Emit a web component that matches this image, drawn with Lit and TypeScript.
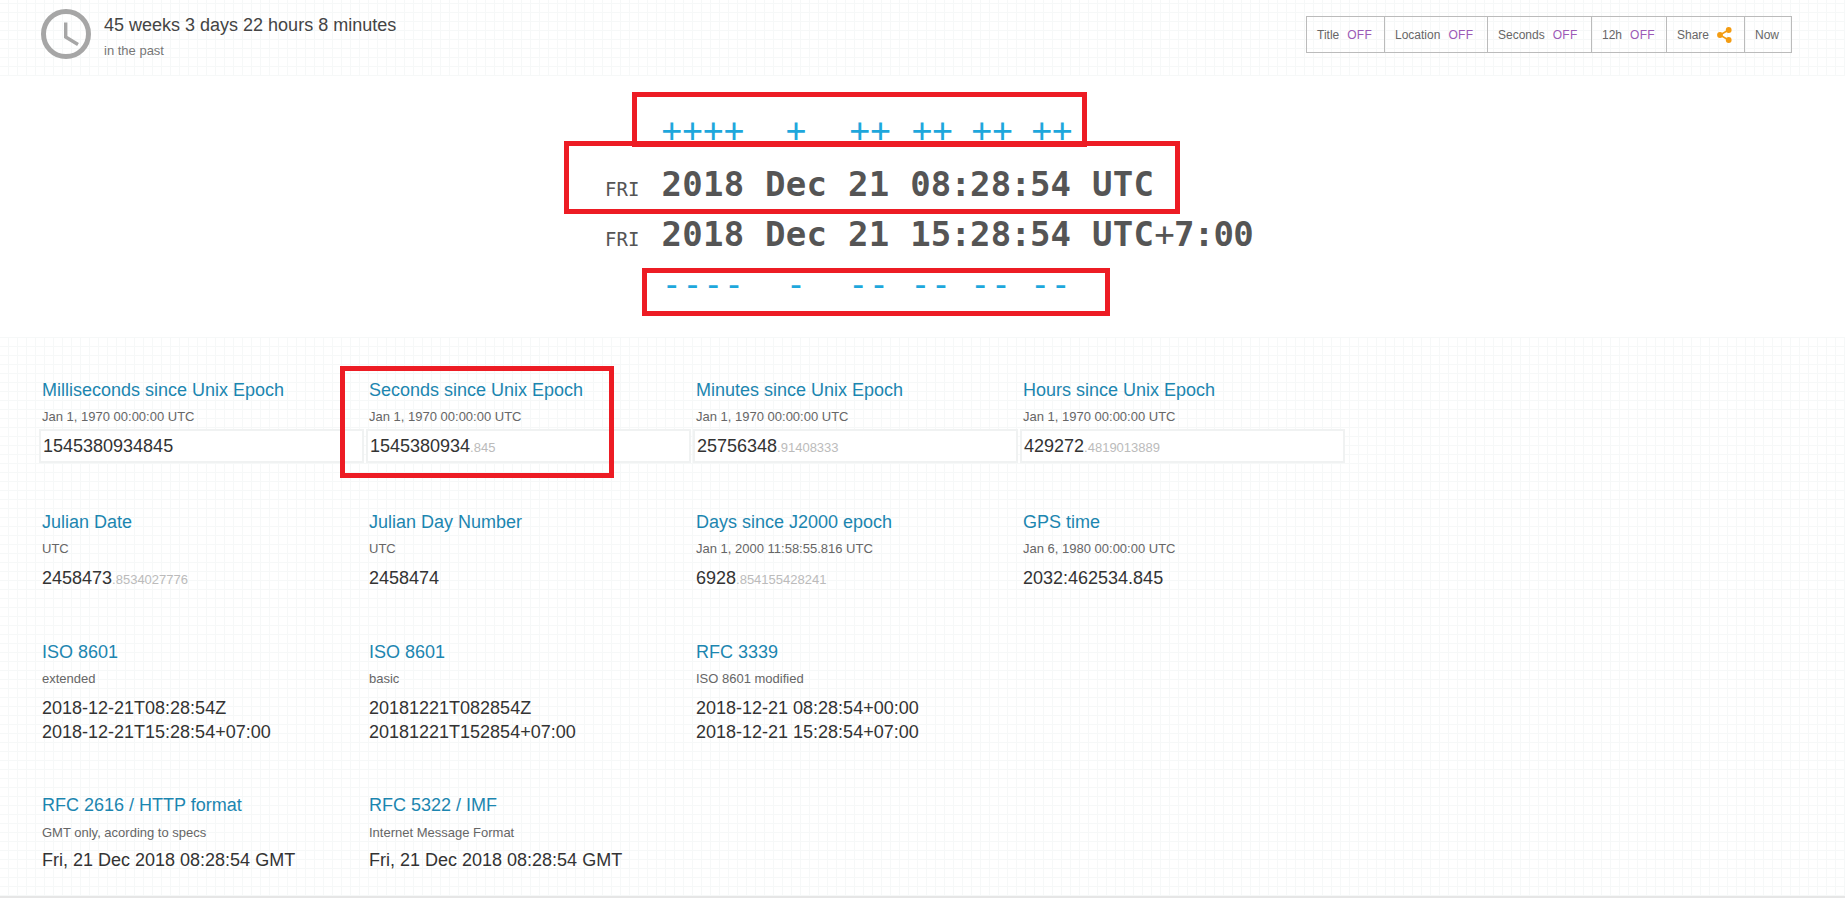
import { LitElement, html, css } from "lit";
import { customElement } from "lit/decorators.js";

interface Card {
  title: string;
  sub: string;
  lines: [string, string?][];
  boxed?: boolean;
}

const ROWS: { cls: string; cards: Card[] }[] = [
  {
    cls: "r1",
    cards: [
      { title: "Milliseconds since Unix Epoch", sub: "Jan 1, 1970 00:00:00 UTC", lines: [["1545380934845"]], boxed: true },
      { title: "Seconds since Unix Epoch", sub: "Jan 1, 1970 00:00:00 UTC", lines: [["1545380934", ".845"]], boxed: true },
      { title: "Minutes since Unix Epoch", sub: "Jan 1, 1970 00:00:00 UTC", lines: [["25756348", ".91408333"]], boxed: true },
      { title: "Hours since Unix Epoch", sub: "Jan 1, 1970 00:00:00 UTC", lines: [["429272", ".4819013889"]], boxed: true },
    ],
  },
  {
    cls: "r2",
    cards: [
      { title: "Julian Date", sub: "UTC", lines: [["2458473", ".8534027776"]] },
      { title: "Julian Day Number", sub: "UTC", lines: [["2458474"]] },
      { title: "Days since J2000 epoch", sub: "Jan 1, 2000 11:58:55.816 UTC", lines: [["6928", ".854155428241"]] },
      { title: "GPS time", sub: "Jan 6, 1980 00:00:00 UTC", lines: [["2032:462534.845"]] },
    ],
  },
  {
    cls: "r3",
    cards: [
      { title: "ISO 8601", sub: "extended", lines: [["2018-12-21T08:28:54Z"], ["2018-12-21T15:28:54+07:00"]] },
      { title: "ISO 8601", sub: "basic", lines: [["20181221T082854Z"], ["20181221T152854+07:00"]] },
      { title: "RFC 3339", sub: "ISO 8601 modified", lines: [["2018-12-21 08:28:54+00:00"], ["2018-12-21 15:28:54+07:00"]] },
    ],
  },
  {
    cls: "r4",
    cards: [
      { title: "RFC 2616 / HTTP format", sub: "GMT only, acording to specs", lines: [["Fri, 21 Dec 2018 08:28:54 GMT"]] },
      { title: "RFC 5322 / IMF", sub: "Internet Message Format", lines: [["Fri, 21 Dec 2018 08:28:54 GMT"]] },
    ],
  },
];

@customElement("app-root")
export class AppRoot extends LitElement {
  static styles = css`
    :host {
      display: block;
      position: relative;
      height: 907px;
      overflow: hidden;
      background: #fff;
      font-family: "Liberation Sans", Arial, sans-serif;
      color: #333;
    }
    .header {
      height: 76px;
      display: flex;
      justify-content: space-between;
      align-items: flex-start;
      padding: 0 53px 0 41px;
      background-image: linear-gradient(#f6f8f8 1px, transparent 1px),
        linear-gradient(90deg, #f6f8f8 1px, transparent 1px);
      background-size: 9px 9px;
      background-position: 8px 3px;
    }
    .since {
      display: flex;
      gap: 13px;
      padding-top: 9px;
    }
    .clock {
      width: 50px;
      height: 50px;
      display: block;
    }
    .since-main {
      font-size: 18px;
      line-height: 20px;
      margin-top: 6px;
      color: #444;
    }
    .since-sub {
      font-size: 13px;
      line-height: 16px;
      margin-top: 8px;
      color: #777;
    }
    .toolbar {
      display: flex;
      margin-top: 16px;
      border: 1px solid #bbb;
      height: 37px;
      box-sizing: border-box;
      font-size: 12px;
      color: #666;
    }
    .tool {
      display: flex;
      align-items: center;
      gap: 8px;
      padding: 0 10px;
      border-left: 1px solid #bbb;
      box-sizing: border-box;
      white-space: nowrap;
    }
    .tool:first-child {
      border-left: none;
    }
    .w1 { width: 77px; }
    .w2 { width: 103px; }
    .w3 { width: 104px; }
    .w4 { width: 75px; }
    .w5 { width: 78px; }
    .w6 { width: 47px; }
    .off {
      color: #9b59b6;
      letter-spacing: 0.3px;
    }
    .share {
      display: block;
    }
    .hero {
      height: 261px;
      box-sizing: border-box;
      padding: 29px 0 0 605px;
      font-family: "DejaVu Sans Mono", monospace;
      font-size: 34px;
      letter-spacing: 0.25px;
    }
    .tline {
      display: flex;
      align-items: baseline;
      height: 50px;
      line-height: 50px;
      white-space: pre;
    }
    .plus {
      margin-bottom: 4px;
    }
    .dow {
      width: 56.5px;
      font-size: 19px;
      color: #555;
      letter-spacing: 0;
    }
    .time {
      font-weight: 700;
      color: #555;
    }
    .colon {
      letter-spacing: -2.05px;
      margin-left: -1px;
      margin-right: 1px;
    }
    .zone {
      letter-spacing: -0.7px;
    }
    .thin {
      font-weight: 400;
    }
    .delta {
      color: #1ea7dc;
    }
    .nudge {
      margin-left: 1.5px;
    }
    .cards {
      height: 559px;
      box-sizing: border-box;
      padding-top: 43px;
      padding-left: 39px;
      background-image: linear-gradient(#f6f8f8 1px, transparent 1px),
        linear-gradient(90deg, #f6f8f8 1px, transparent 1px);
      background-size: 9px 9px;
      background-position: 8px 0;
    }
    .row {
      display: grid;
      grid-template-columns: repeat(4, 325px);
      column-gap: 2px;
    }
    .r1 {
      margin-bottom: 49px;
    }
    .r2 {
      margin-bottom: 50px;
    }
    .r3 {
      margin-bottom: 51px;
    }
    .title {
      padding-left: 3px;
      font-size: 18px;
      line-height: 20px;
      color: #1c86b0;
    }
    .sub {
      padding-left: 3px;
      margin-top: 9px;
      font-size: 13px;
      line-height: 16px;
      color: #666;
    }
    .r4 .sub {
      margin-top: 10px;
    }
    .sub + .value {
      margin-top: 8px;
    }
    .r2 .sub + .value,
    .r3 .sub + .value {
      margin-top: 9px;
    }
    .r4 .sub + .value {
      margin-top: 7px;
    }
    .value {
      padding-left: 3px;
      font-size: 18px;
      line-height: 25px;
      color: #333;
    }
    .r3 .value {
      line-height: 24px;
    }
    .r1 .sub + .boxed {
      margin-top: 4px;
    }
    .boxed {
      border: 2px solid #f0f2f2;
      background: #fff;
      height: 34px;
      box-sizing: border-box;
      padding-left: 2px;
      line-height: 30px;
    }
    .frac {
      font-size: 13px;
      color: #bbb;
    }
    .footer {
      height: 2px;
      background: #e6e6e6;
    }
    .mark {
      position: absolute;
      box-sizing: border-box;
      border: 5px solid #ed1c24;
      pointer-events: none;
    }
    .m1 { left: 632px; top: 92px; width: 455px; height: 55px; }
    .m2 { left: 564px; top: 141px; width: 616px; height: 73px; }
    .m3 { left: 642px; top: 268px; width: 468px; height: 48px; }
    .m4 { left: 340px; top: 366px; width: 274px; height: 112px; }
  `;

  render() {
    const c = html`<span class="colon">:</span>`;
    const gap = html`<span class="colon"> </span>`;
    return html`
      <div class="header">
        <div class="since">
          <svg class="clock" viewBox="0 0 50 50" aria-hidden="true">
            <circle cx="25" cy="25" r="22.5" fill="none" stroke="#a6a6a6" stroke-width="5"></circle>
            <path d="M24.7 13.5V28L37 35.5" fill="none" stroke="#a6a6a6" stroke-width="3.4"></path>
          </svg>
          <div>
            <div class="since-main">45 weeks 3 days 22 hours 8 minutes</div>
            <div class="since-sub">in the past</div>
          </div>
        </div>
        <div class="toolbar">
          <div class="tool w1">Title <span class="off">OFF</span></div>
          <div class="tool w2">Location <span class="off">OFF</span></div>
          <div class="tool w3">Seconds <span class="off">OFF</span></div>
          <div class="tool w4">12h <span class="off">OFF</span></div>
          <div class="tool w5">
            Share
            <svg class="share" width="15" height="16" viewBox="0 0 15 16" aria-hidden="true">
              <path d="M11.5 3L3 8l8.5 5" fill="none" stroke="#f39c12" stroke-width="1.6"></path>
              <circle cx="11.7" cy="3" r="2.9" fill="#f39c12"></circle>
              <circle cx="3" cy="8" r="2.9" fill="#f39c12"></circle>
              <circle cx="11.7" cy="13" r="2.9" fill="#f39c12"></circle>
            </svg>
          </div>
          <div class="tool w6">Now</div>
        </div>
      </div>
      <div class="hero">
        <div class="tline plus"><span class="dow"></span><span class="delta">++++  +  <span class="nudge">++ ++${gap}++${gap}++</span></span></div>
        <div class="tline"><span class="dow">FRI</span><span class="time">2018 Dec 21 08${c}28${c}54 UTC</span></div>
        <div class="tline"><span class="dow">FRI</span><span class="time">2018 Dec 21 15${c}28${c}54 UTC<span class="zone"><span class="thin">+</span>7:00</span></span></div>
        <div class="tline"><span class="dow"></span><span class="delta">----  -  -- --${gap}--${gap}--</span></div>
      </div>
      <div class="cards">
        ${ROWS.map(
          (r) => html`
            <div class="row ${r.cls}">
              ${r.cards.map(
                (card) => html`
                  <div>
                    <div class="title">${card.title}</div>
                    <div class="sub">${card.sub}</div>
                    ${card.lines.map(
                      (l) => html`<div class="value ${card.boxed ? "boxed" : ""}">${l[0]}${l[1]
                        ? html`<span class="frac">${l[1]}</span>`
                        : ""}</div>`
                    )}
                  </div>
                `
              )}
            </div>
          `
        )}
      </div>
      <div class="footer"></div>
      <div class="mark m1"></div>
      <div class="mark m2"></div>
      <div class="mark m3"></div>
      <div class="mark m4"></div>
    `;
  }
}
